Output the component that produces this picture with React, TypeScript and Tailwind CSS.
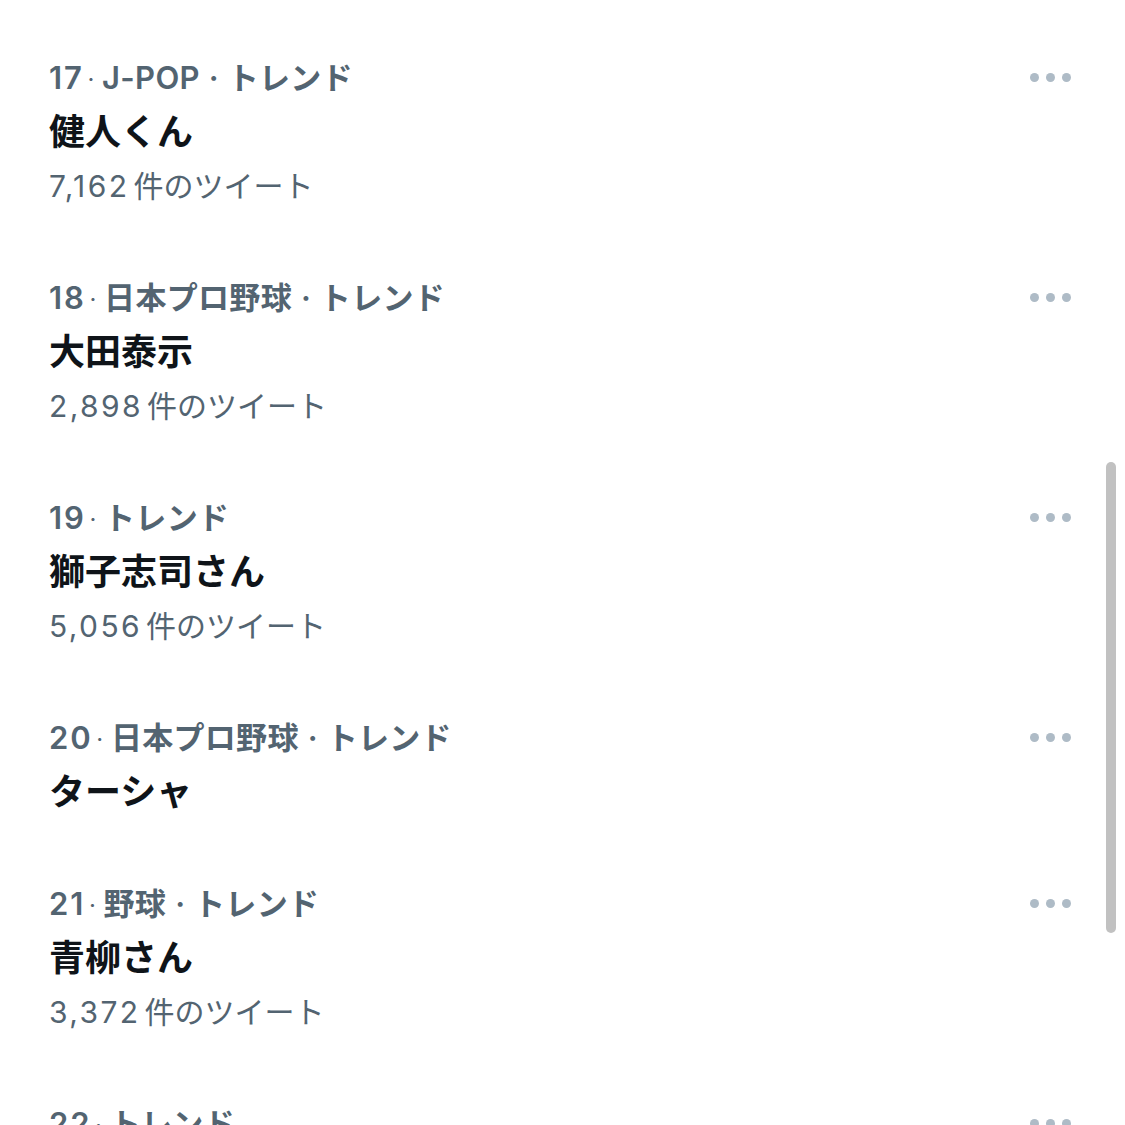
import React from "react";

type Trend = { rank: number; cat: string[]; title: string; count?: string };

const trends: Trend[] = [
  { rank: 17, cat: ["J-POP", "トレンド"], title: "健人くん", count: "7,162" },
  { rank: 18, cat: ["日本プロ野球", "トレンド"], title: "大田泰示", count: "2,898" },
  { rank: 19, cat: ["トレンド"], title: "獅子志司さん", count: "5,056" },
  { rank: 20, cat: ["日本プロ野球", "トレンド"], title: "ターシャ" },
  { rank: 21, cat: ["野球", "トレンド"], title: "青柳さん", count: "3,372" },
  { rank: 22, cat: ["トレンド"], title: "", count: "" },
];

const Dots = () => (
  <div className="flex items-center gap-[7px]">
    <span className="block w-[9px] h-[9px] rounded-full bg-[#aebbc6]" />
    <span className="block w-[9px] h-[9px] rounded-full bg-[#aebbc6]" />
    <span className="block w-[9px] h-[9px] rounded-full bg-[#aebbc6]" />
  </div>
);

export default function App() {
  return (
    <div
      className="relative w-[1125px] h-[1125px] overflow-hidden bg-white"
      style={{ fontFamily: 'Inter, "Noto Sans CJK JP", sans-serif' }}
    >
      <div className="flex flex-col pt-[49px] pl-[49px] pr-[54px]">
        {trends.map((t) => (
          <div key={t.rank} className="flex flex-col pb-[56px]">
            <div className="flex items-center justify-between h-[56px]">
              <div className="text-[31px] font-semibold text-[#536471] leading-none whitespace-nowrap">
                <span className="tracking-[0.06em]">{t.rank}</span>
                <span className="text-[20px] ml-[4px] mr-[8px] relative top-[-3px]">·</span>
                {t.cat.map((c, i) => (
                  <span key={i}>
                    {i > 0 && <span className="mx-[9px]">·</span>}
                    <span className="tracking-[0.01em]">{c}</span>
                  </span>
                ))}
              </div>
              <Dots />
            </div>
            {t.title && (
              <div className="h-[54px] flex items-center text-[36px] font-bold text-[#0f1419] leading-none">
                {t.title}
              </div>
            )}
            {t.count && (
              <div className="h-[54px] flex items-center text-[30px] text-[#536471] leading-none">
                <span className="tracking-[0.08em]">{t.count}</span>
                <span className="ml-[4px]">件のツイート</span>
              </div>
            )}
          </div>
        ))}
      </div>
      <div className="absolute left-[1106px] top-[462px] w-[10px] h-[471px] rounded-full bg-[#c1c1c1]" />
    </div>
  );
}
